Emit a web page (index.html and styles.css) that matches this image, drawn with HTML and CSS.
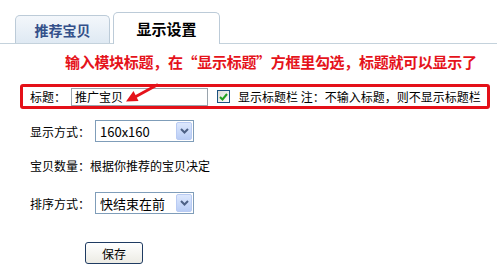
FILE: index.html
```html
<!DOCTYPE html>
<html lang="zh-CN">
<head>
    <meta charset="UTF-8">
    <title>显示设置</title>
    <link rel="stylesheet" href="styles.css">
</head>
<body>
    <div class="tabs">
        <div class="tab">推荐宝贝</div>
        <div class="tab active">显示设置</div>
    </div>

    <div class="panel">
        <div class="hint">输入模块标题，在“显示标题”方框里勾选，标题就可以显示了</div>

        <div class="title-box">
            <span class="label">标题：</span>
            <div class="text-input">推广宝贝</div>
            <span class="check">
                <svg width="9" height="8" viewBox="0 0 9 8"><path d="M1 4 L3.5 6.5 L8 1" fill="none" stroke="#21a121" stroke-width="2"/></svg>
            </span>
            <span class="note">显示标题栏 注：不输入标题，则不显示标题栏</span>
        </div>

        <svg class="arrow" width="45" height="28" viewBox="0 0 45 28">
            <line x1="37" y1="5" x2="15" y2="17" stroke="#e5131b" stroke-width="3" stroke-linecap="round"/>
            <polygon points="6,21.5 18.5,21 13.5,11" fill="#e5131b"/>
        </svg>

        <div class="row">
            <span class="label">显示方式：</span>
            <div class="select">
                <span class="value">160x160</span>
                <span class="drop">
                    <svg width="9" height="6" viewBox="0 0 9 6"><path d="M1 1 L4.5 4.5 L8 1" fill="none" stroke="#4d6185" stroke-width="2"/></svg>
                </span>
            </div>
        </div>

        <div class="row text-row">宝贝数量：根据你推荐的宝贝决定</div>

        <div class="row sort-row">
            <span class="label">排序方式：</span>
            <div class="select">
                <span class="value">快结束在前</span>
                <span class="drop">
                    <svg width="9" height="6" viewBox="0 0 9 6"><path d="M1 1 L4.5 4.5 L8 1" fill="none" stroke="#4d6185" stroke-width="2"/></svg>
                </span>
            </div>
        </div>

        <div class="actions">
            <button type="button" class="btn">保存</button>
        </div>
    </div>
</body>
</html>
```

FILE: styles.css
```css
body {
    margin: 0;
    background-color: #fff;
    color: #000;
    font-family: "Noto Sans CJK SC", "Noto Sans", sans-serif;
    font-size: 12px;
    position: relative;
}

.tabs {
    display: flex;
    align-items: flex-end;
    gap: 3px;
    padding: 12px 0 0 15px;
    border-bottom: 1px solid #c4d2dc;
}

.tab {
    width: 95px;
    height: 28px;
    box-sizing: border-box;
    display: flex;
    align-items: center;
    justify-content: center;
    border: 1px solid #bccbd8;
    border-bottom: none;
    border-radius: 5px 5px 0 0;
    background: linear-gradient(#f3f7fb, #dfe9f3);
    color: #34508a;
    font-size: 14px;
    font-weight: bold;
}

.tab.active {
    width: 107px;
    height: 32px;
    margin-bottom: -1px;
    background: #fff;
    color: #000;
    font-size: 15px;
}

.panel {
    position: relative;
}

.hint {
    margin-top: 8px;
    padding-left: 65px;
    line-height: 20px;
    color: #e5131b;
    font-size: 15px;
    font-weight: bold;
    letter-spacing: -0.3px;
}

.title-box {
    display: flex;
    align-items: center;
    box-sizing: border-box;
    height: 25px;
    width: 470px;
    margin: 12px 0 0 20px;
    padding-left: 7px;
    border: 3px solid #e41018;
    border-radius: 3px;
}

.title-box .label {
    font-size: 12px;
    width: 41px;
}

.text-input {
    width: 137px;
    height: 18px;
    box-sizing: border-box;
    border: 1px solid #9aa4ad;
    padding-left: 3px;
    font-size: 12px;
    line-height: 16px;
}

.check {
    display: flex;
    align-items: center;
    justify-content: center;
    width: 13px;
    height: 13px;
    box-sizing: border-box;
    margin-left: 9px;
    border: 1px solid #1c5180;
    background: linear-gradient(135deg, #dcdcd6, #fff);
}

.note {
    margin-left: 8px;
    white-space: nowrap;
}

.arrow {
    position: absolute;
    left: 120px;
    top: 28px;
}

.row {
    display: flex;
    align-items: center;
    margin-top: 11px;
    padding-left: 30px;
}

.row .label {
    width: 65px;
}

.text-row {
    margin-top: 14px;
    line-height: 20px;
}

.sort-row {
    margin-top: 16px;
}

.select {
    display: flex;
    align-items: center;
    width: 99px;
    height: 22px;
    box-sizing: border-box;
    border: 1px solid #7f9db9;
    background: #fff;
    padding: 1px;
    font-size: 13px;
}

.select .value {
    flex: 1;
    padding-left: 3px;
}

.select .drop {
    display: flex;
    align-items: center;
    justify-content: center;
    width: 16px;
    height: 18px;
    box-sizing: border-box;
    border: 1px solid #b9cbf3;
    border-radius: 2px;
    background: linear-gradient(#dde8fd, #b9cdf5);
}

.actions {
    margin-top: 28px;
    padding-left: 85px;
}

.btn {
    width: 58px;
    height: 22px;
    border: 1px solid #1f3b62;
    border-radius: 3px;
    background: linear-gradient(#fff, #ecebe4);
    font-family: inherit;
    font-size: 12px;
    padding: 0;
}
```
